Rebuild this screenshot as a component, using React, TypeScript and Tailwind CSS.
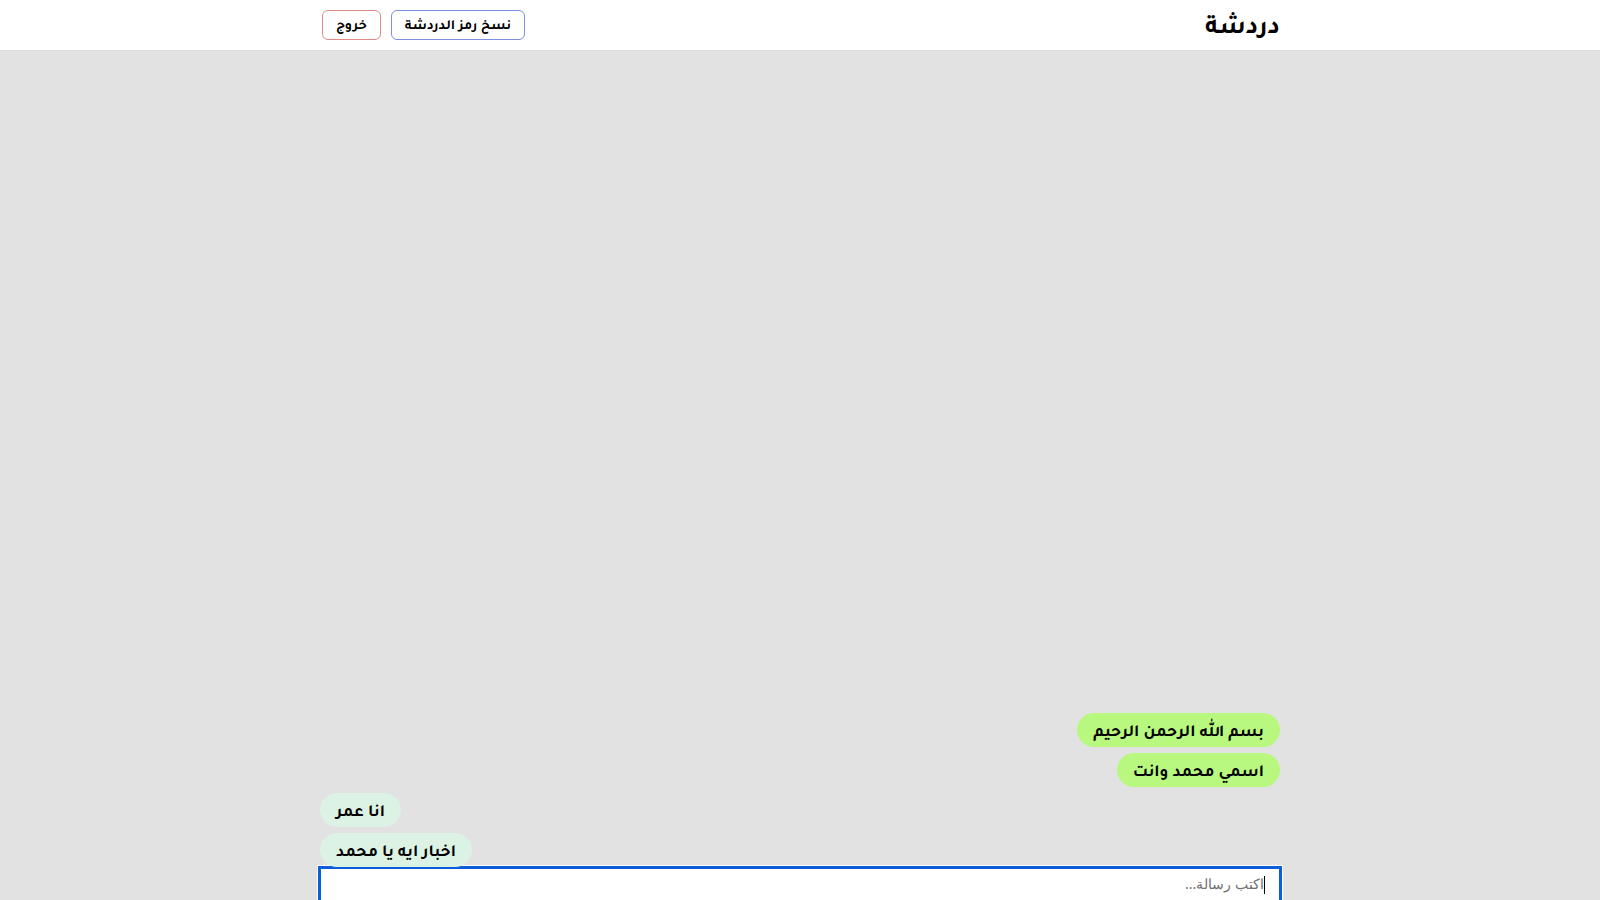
const sent = ["بسم الله الرحمن الرحيم", "اسمي محمد وانت"];
const received = ["انا عمر", "اخبار ايه يا محمد"];

export default function App() {
  return (
    <div dir="rtl" className="min-h-screen bg-[#e2e2e2] font-['Tajawal',sans-serif] text-black">
      <header className="bg-white border-b border-[#dcdcdc] h-[51px]">
        <div className="w-[960px] mx-auto h-full flex items-center justify-between">
          <h1 className="text-[26px] font-bold leading-none pt-[8px]">دردشة</h1>
          <div className="flex items-center gap-[10px] pl-[2px]">
            <button className="h-[30px] px-[13px] pt-[4px] rounded-md border border-[#7d8fe3] bg-white text-[14px] font-bold leading-none">
              نسخ رمز الدردشة
            </button>
            <button className="h-[30px] px-[13px] pt-[4px] rounded-md border border-[#e08a8a] bg-white text-[14px] font-bold leading-none">
              خروج
            </button>
          </div>
        </div>
      </header>

      <main className="w-[960px] mx-auto">
        <div className="h-[816px] flex flex-col justify-end gap-[6px]">
          {sent.map((m) => (
            <div key={m} className="self-start bg-[#b9f87f] rounded-full h-[34px] px-4 pt-[6px] flex items-center text-[17px] font-bold leading-none">
              {m}
            </div>
          ))}
          {received.map((m) => (
            <div key={m} className="self-end bg-[#dcf2e4] rounded-full h-[34px] px-4 pt-[6px] flex items-center text-[17px] font-bold leading-none">
              {m}
            </div>
          ))}
        </div>
        <div className="-mt-px -mx-[2px] bg-white border-[3px] border-[#0b5ed7] shadow-[0_0_0_1px_white] h-[50px] flex items-start pt-[4px] pr-[14px]">
          <span className="w-px h-[18px] bg-black mt-[3px]" />
          <span className="font-['Noto_Sans',sans-serif] text-[14px] text-[#6f6f6f]">اكتب رسالة...</span>
        </div>
      </main>
    </div>
  );
}
